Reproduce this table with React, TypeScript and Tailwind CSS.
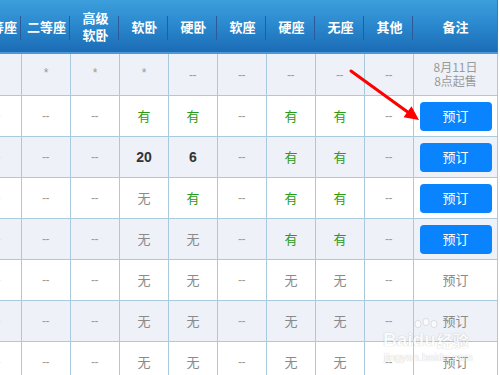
import React from "react";

type Cell = string;

const headers: string[][] = [
  ["一等座"],
  ["二等座"],
  ["高级", "软卧"],
  ["软卧"],
  ["硬卧"],
  ["软座"],
  ["硬座"],
  ["无座"],
  ["其他"],
  ["备注"],
];

const rows: { cells: Cell[]; remark: "sale" | "btn" | "gray" }[] = [
  { cells: ["*", "*", "*", "*", "--", "--", "--", "--", "--"], remark: "sale" },
  { cells: ["--", "--", "--", "有", "有", "--", "有", "有", "--"], remark: "btn" },
  { cells: ["--", "--", "--", "20", "6", "--", "有", "有", "--"], remark: "btn" },
  { cells: ["--", "--", "--", "无", "有", "--", "有", "有", "--"], remark: "btn" },
  { cells: ["--", "--", "--", "无", "无", "--", "有", "有", "--"], remark: "btn" },
  { cells: ["--", "--", "--", "无", "无", "--", "无", "无", "--"], remark: "gray" },
  { cells: ["--", "--", "--", "无", "无", "--", "无", "无", "--"], remark: "gray" },
  { cells: ["--", "--", "--", "无", "无", "--", "无", "无", "--"], remark: "gray" },
];

const gridCols =
  "grid grid-cols-[49px_49px_49px_49px_49px_49px_49px_49px_49px_84px]";

function CellContent({ v }: { v: string }) {
  if (v === "有")
    return <span className="text-[13px] text-[#2b9a16]">有</span>;
  if (v === "无")
    return <span className="text-[13px] text-[#8a8a8a]">无</span>;
  if (v === "*")
    return (
      <span className="text-[12px] text-[#9a9a9a] -mt-[4px] font-['Liberation_Sans',sans-serif]">
        *
      </span>
    );
  if (v === "--")
    return (
      <span className="text-[12px] tracking-[-0.5px] text-[#a09a98] font-['Liberation_Sans',sans-serif] pr-[1px]">
        --
      </span>
    );
  return (
    <span className="text-[14px] font-bold text-[#333333] font-['Liberation_Sans',sans-serif]">
      {v}
    </span>
  );
}

export default function App() {
  return (
    <div className="relative w-[500px] h-[375px] overflow-hidden bg-white font-['Noto_Sans_CJK_SC','Noto_Sans',sans-serif]">
      <div className="ml-[-27px] w-[525px]">
        {/* header */}
        <div
          className={`${gridCols} h-[54px] bg-gradient-to-b from-[#3c9fdc] via-[#2a87cd] to-[#1b6cb5] border-b-2 border-[#4f97d6]`}
        >
          {headers.map((h, i) => (
            <div
              key={i}
              className={`relative flex flex-col items-center justify-center text-white font-bold text-[13px] leading-[17px] ${
                i === 9 ? "border-r border-[#2a7cc4]" : ""
              }`}
            >
              {h.map((l, j) => (
                <span key={j}>{l}</span>
              ))}
              {i < 9 && (
                <span className="absolute right-[1px] top-[16px] h-[24px] w-px bg-[#2c5a9b]" />
              )}
            </div>
          ))}
        </div>
        {/* body */}
        {rows.map((r, ri) => (
          <div
            key={ri}
            className={`${gridCols} ${ri === 0 ? "h-[42px]" : "h-[41px]"} ${
              ri % 2 === 0 ? "bg-[#eef1f8]" : "bg-white"
            }`}
          >
            {r.cells.map((c, ci) => (
              <div
                key={ci}
                className="flex items-center justify-center border-r border-b border-[#a9c9dc]"
              >
                <CellContent v={c} />
              </div>
            ))}
            <div className="flex items-center justify-center border-r border-b border-[#a9c9dc]">
              {r.remark === "sale" && (
                <div className="flex flex-col items-center text-[12px] leading-[14px] text-[#9a9a9a] -mt-[2px]">
                  <span>8月11日</span>
                  <span>8点起售</span>
                </div>
              )}
              {r.remark === "btn" && (
                <button className="w-[72px] h-[29px] rounded-[4px] bg-[#0a84fe] text-white text-[13px] flex items-center justify-center">
                  预订
                </button>
              )}
              {r.remark === "gray" && (
                <span className="text-[13px] text-[#8a8a8a]">预订</span>
              )}
            </div>
          </div>
        ))}
      </div>

      {/* red arrow annotation */}
      <svg
        className="absolute left-0 top-0 pointer-events-none"
        width="500"
        height="375"
        viewBox="0 0 500 375"
      >
        <line
          x1="351"
          y1="71"
          x2="409"
          y2="113"
          stroke="#ff0000"
          strokeWidth="3"
          strokeLinecap="round"
        />
        <polygon points="419,120 403.5,117.2 411.5,106.2" fill="#ff0000" />
      </svg>

      {/* watermark */}
      <div className="absolute left-[383px] top-[318px] w-[90px] h-[48px] pointer-events-none opacity-70">
        <svg
          width="26"
          height="17"
          viewBox="0 0 26 17"
          className="absolute left-[30px] top-0"
        >
          <g fill="#ffffff" stroke="rgba(0,0,0,0.2)" strokeWidth="0.7">
            <ellipse cx="5" cy="6" rx="3" ry="3.6" />
            <ellipse cx="13" cy="4" rx="3" ry="3.6" />
            <ellipse cx="21" cy="6" rx="3" ry="3.6" />
          </g>
        </svg>
        <div className="absolute left-0 top-[12px] flex items-end leading-none">
          <span className="text-[19px] font-bold text-white font-['Liberation_Sans',sans-serif] [text-shadow:0_0_1px_rgba(0,0,0,0.4)]">
            Baidu
          </span>
          <span className="ml-[1px] mb-[1px] text-[16px] font-bold text-white [text-shadow:0_0_1px_rgba(0,0,0,0.4)]">
            经验
          </span>
        </div>
        <span className="absolute left-[1px] top-[33px] text-[11px] text-white font-['Liberation_Sans',sans-serif] leading-[13px] [text-shadow:0_0_1px_rgba(0,0,0,0.4)]">
          jingyan.baidu.com
        </span>
      </div>
    </div>
  );
}
